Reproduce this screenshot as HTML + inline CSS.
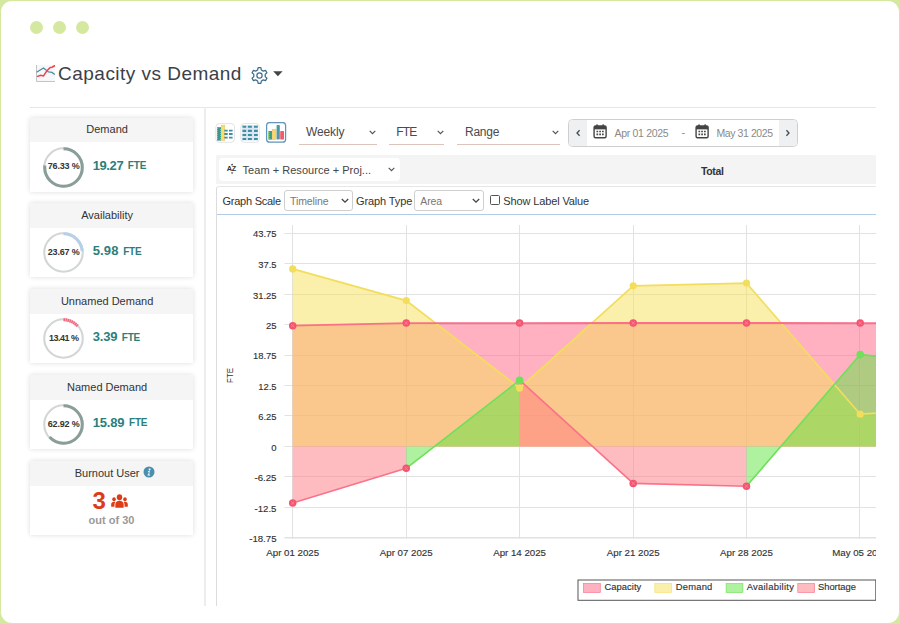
<!DOCTYPE html>
<html>
<head>
<meta charset="utf-8">
<title>Capacity vs Demand</title>
<style>
html,body{margin:0;padding:0;}
body{width:900px;height:624px;overflow:hidden;background:#d5e8a0;font-family:"Liberation Sans",sans-serif;position:relative;}
#card{position:absolute;left:1px;top:1px;width:897.8px;height:621.9px;background:#fff;border-radius:11px;}
.t{position:absolute;white-space:nowrap;line-height:1;color:#333;}
.dot{position:absolute;width:13px;height:13px;border-radius:50%;background:#d5e8a0;top:20.8px;}
.hl{position:absolute;background:#e4e4e4;}
.kc{position:absolute;left:29.9px;width:163.2px;height:74px;background:#fff;box-shadow:0 0 5px rgba(0,0,0,0.14);}
.kc .hd{position:absolute;left:0;top:0;width:100%;height:24.6px;background:#f5f5f5;}
.kc .ti{position:absolute;left:-4.4px;width:100%;text-align:center;top:6.5px;font-size:11px;line-height:1;color:#333;white-space:nowrap;}
.kc svg{position:absolute;left:12.6px;top:28.1px;}
.kc .pc{position:absolute;left:12.3px;top:44.6px;width:43px;text-align:center;font-size:9px;font-weight:bold;line-height:1;color:#333;letter-spacing:-0.15px;white-space:nowrap;}
.kc .v{position:absolute;left:62.8px;top:41px;font-size:13px;font-weight:bold;color:#2b7f7b;line-height:1;letter-spacing:-0.3px;white-space:nowrap;}
.kc .v span{font-size:10px;letter-spacing:-0.2px;margin-left:4.6px;position:relative;top:-0.8px;}
.sel{position:absolute;top:118px;height:25.6px;border-bottom:1.2px solid #dcc3bb;}
.sel .t{top:7.5px;font-size:12px;color:#4a4a4a;}
.chev{position:absolute;}
</style>
</head>
<body>
<div id="card"></div>
<div class="dot" style="left:29.8px"></div>
<div class="dot" style="left:52.8px"></div>
<div class="dot" style="left:75.5px"></div>

<!-- title -->
<svg style="position:absolute;left:35px;top:64px" width="22" height="19" viewBox="0 0 22 19">
<rect x="1.5" y="1" width="18.5" height="16.5" fill="#f6f7f8"/>
<path d="M1.5 1V17.5H20" fill="none" stroke="#c4c4c4" stroke-width="1"/>
<path d="M1.5 8.3L8.5 4L13.5 8L17 8.4L19.8 10.6" fill="none" stroke="#4a8fa3" stroke-width="1.3"/>
<path d="M2 12.6L5.5 11.2L8.5 12L12 6.6L15 3.6L17 3.2L20 1.5" fill="none" stroke="#f0404f" stroke-width="1.5"/>
</svg>
<div class="t" id="title" style="left:58.1px;top:64.1px;font-size:19px;color:#3b4049;letter-spacing:0.47px;">Capacity vs Demand</div>
<svg style="position:absolute;left:250px;top:65.5px" width="19" height="19" viewBox="-9.5 -9.5 19 19">
<g fill="none" stroke="#3d6d8c" stroke-width="1.25" stroke-linejoin="round">
<path d="M-1.89 -5.48L-1.37 -7.78L1.37 -7.78L1.89 -5.48L3.81 -4.38L6.05 -5.08L7.42 -2.70L5.69 -1.11L5.69 1.11L7.42 2.70L6.05 5.08L3.81 4.38L1.89 5.48L1.37 7.78L-1.37 7.78L-1.89 5.48L-3.81 4.38L-6.05 5.08L-7.42 2.70L-5.69 1.11L-5.69 -1.11L-7.42 -2.70L-6.05 -5.08L-3.81 -4.38Z"/>
<circle r="2.6"/>
</g>
</svg>
<svg style="position:absolute;left:272.5px;top:71px" width="10" height="6" viewBox="0 0 10 6"><path d="M0.2 0.3H9.6L4.9 5.3Z" fill="#444"/></svg>

<div class="hl" style="left:30px;top:106.8px;width:846px;height:1.2px;background:#e6e6e6"></div>
<div class="hl" style="left:204.1px;top:107px;width:1.9px;height:499px;background:#ecedef"></div>

<!-- KPI cards -->
<div class="kc" style="top:117.5px">
  <div class="hd"></div><div class="ti">Demand</div>
  <svg width="43" height="43" viewBox="-21.5 -21.5 43 43">
    <circle r="19.25" fill="none" stroke="#d3d6d6" stroke-width="2.1"/>
    <circle r="18.75" fill="none" stroke="#8a9e99" stroke-width="3" stroke-dasharray="89.9 117.8" transform="rotate(-90)"/>
  </svg>
  <div class="pc">76.33 %</div>
  <div class="v" style="letter-spacing:-0.4px">19.27<span>FTE</span></div>
</div>
<div class="kc" style="top:203.4px">
  <div class="hd"></div><div class="ti">Availability</div>
  <svg width="43" height="43" viewBox="-21.5 -21.5 43 43">
    <circle r="19.25" fill="none" stroke="#d3d6d6" stroke-width="2.1"/>
    <circle r="18.75" fill="none" stroke="#b5d0e8" stroke-width="3" stroke-dasharray="27.9 117.8" transform="rotate(-90)"/>
  </svg>
  <div class="pc">23.67 %</div>
  <div class="v" style="letter-spacing:0.15px">5.98<span>FTE</span></div>
</div>
<div class="kc" style="top:289.3px">
  <div class="hd"></div><div class="ti">Unnamed Demand</div>
  <svg width="43" height="43" viewBox="-21.5 -21.5 43 43">
    <circle r="19.25" fill="none" stroke="#d3d6d6" stroke-width="2.1"/>
    <circle r="18.75" fill="none" stroke="#fbc3cc" stroke-width="3" stroke-dasharray="15.80 117.8" transform="rotate(-90)"/>
    <circle r="18.75" fill="none" stroke="#f2667e" stroke-width="3" stroke-dasharray="1.5 0.54 1.5 0.54 1.5 0.54 1.5 0.54 1.5 0.54 1.5 0.54 1.5 0.54 1.5 117.8" transform="rotate(-90)"/>
  </svg>
  <div class="pc" style="letter-spacing:-0.5px">13.41 %</div>
  <div class="v" style="letter-spacing:-0.2px">3.39<span>FTE</span></div>
</div>
<div class="kc" style="top:375.2px">
  <div class="hd"></div><div class="ti">Named Demand</div>
  <svg width="43" height="43" viewBox="-21.5 -21.5 43 43">
    <circle r="19.25" fill="none" stroke="#d3d6d6" stroke-width="2.1"/>
    <circle r="18.75" fill="none" stroke="#8a9e99" stroke-width="3" stroke-dasharray="74.1 117.8" transform="rotate(-90)"/>
  </svg>
  <div class="pc">62.92 %</div>
  <div class="v" style="letter-spacing:-0.16px">15.89<span>FTE</span></div>
</div>
<div class="kc" style="top:461.1px">
  <div class="hd"></div><div class="ti">Burnout User</div>
  <svg style="left:113.4px;top:5.1px" width="12" height="12" viewBox="0 0 12 12"><circle cx="6" cy="6" r="5.5" fill="#4a8fae"/><path d="M6.6 2.6a.9.9 0 1 1-.01 0M4.9 5h1.9L6.1 8.6h.9V9.4H4.6V8.6h.7L5.8 5.8H4.9Z" fill="#fff"/></svg>
  <div class="t" style="left:62.6px;top:28.4px;font-size:24px;font-weight:bold;color:#dc3d17;">3</div>
  <svg style="left:81.3px;top:33.4px" width="17" height="14.2" viewBox="0 0 18 14" preserveAspectRatio="none"><g fill="#dc3d17">
    <circle cx="9" cy="3.2" r="2.9"/><path d="M4.6 13.6V10.4C4.6 8 6.4 6.6 9 6.6S13.400000000000002 8 13.400000000000002 10.4V13.6Z"/>
    <circle cx="3.2" cy="5.2" r="1.9"/><path d="M0.2 12.6V10.2C0.2 8.6 1.4 7.6 3.2 7.6C3.7 7.6 4.2 7.7 4.6 7.9C4 8.6 3.7 9.5 3.7 10.4V12.6Z"/>
    <circle cx="14.8" cy="5.2" r="1.9"/><path d="M17.8 12.6V10.2C17.8 8.6 16.6 7.6 14.8 7.600000000000001C14.3 7.6 13.8 7.7 13.4 7.9C14 8.6 14.3 9.5 14.3 10.4V12.6Z"/>
  </g></svg>
  <div class="t" style="left:0;width:100%;text-align:center;top:54px;font-size:11px;font-weight:bold;color:#9a9a9a;">out of 30</div>
</div>

<!-- TOOLBAR -->
<!-- view icons -->
<svg style="position:absolute;left:215px;top:122px" width="73" height="22" viewBox="215 122 73 22">
  <rect x="215.9" y="123.6" width="18.6" height="18.7" rx="3.4" fill="#fff" stroke="#e4e4e4" stroke-width="1"/>
  <rect x="217.1" y="127.2" width="3.9" height="13.4" fill="#3a958f"/>
  <path d="M217.1 128.5h1M217.1 130.5h1M217.1 132.5h1M217.1 134.5h1M217.1 136.5h1M217.1 138.5h1M220 129.5h1M220 131.5h1M220 133.5h1M220 135.5h1M220 137.5h1M220 139.3h1" stroke="#8fe04a" stroke-width="0.9"/>
  <rect x="221.4" y="125.2" width="3.4" height="15.2" fill="#f8e062" stroke="#f5bd72" stroke-width="0.6"/>
  <path d="M224.3 130.7h3.4M229 130.7h3.6M224.3 134h3.4M229 134h3.6M224.3 137.6h3.4M229 137.6h3.6" stroke="#3f8fa0" stroke-width="1.8"/>
  <rect x="240.9" y="123.6" width="18.4" height="18.7" rx="3.4" fill="#fff" stroke="#e4e4e4" stroke-width="1"/>
  <rect x="242.1" y="125" width="16" height="15.6" fill="#dbe8f4"/>
  <path d="M242.5 126.7h3.7M247.9 126.7h4M254 126.7h3.8M242.5 130.9h3.7M247.9 130.9h4M254 130.9h3.8M242.5 135h3.7M247.9 135h4M254 135h3.8M242.5 139h3.7M247.9 139h4M254 139h3.8" stroke="#3f8fa0" stroke-width="2.1"/>
  <rect x="266.6" y="122.6" width="19" height="19.6" rx="3" fill="#fff" stroke="#6293bb" stroke-width="1.25"/>
  <rect x="268.4" y="131" width="3.6" height="8.6" fill="#3f9a8c"/>
  <path d="M268.4 132.5h1.2M268.4 134.5h1.2M268.4 136.5h1.2M268.4 138.5h1.2" stroke="#9ad84a" stroke-width="0.9"/>
  <rect x="272.2" y="129.2" width="3.8" height="10.4" fill="#f6d96b" stroke="#f3b66a" stroke-width="0.5"/>
  <rect x="276.6" y="125" width="3.2" height="14.6" rx="0.8" fill="#4a97a6"/>
  <rect x="280.2" y="131" width="3.8" height="8.6" rx="0.6" fill="#f3596f"/>
</svg>

<!-- selects -->
<div class="sel" style="left:298.5px;width:78px"><div class="t" id="s1" style="left:7.5px;letter-spacing:-0.12px">Weekly</div>
  <svg class="chev" style="left:70px;top:11.5px" width="7" height="5" viewBox="0 0 7 5"><path d="M0.7 0.8L3.5 3.6L6.3 0.8" fill="none" stroke="#555" stroke-width="1.2"/></svg></div>
<div class="sel" style="left:388.5px;width:55.5px"><div class="t" id="s2" style="left:7.8px;letter-spacing:-0.8px">FTE</div>
  <svg class="chev" style="left:48px;top:11.5px" width="7" height="5" viewBox="0 0 7 5"><path d="M0.7 0.8L3.5 3.6L6.3 0.8" fill="none" stroke="#555" stroke-width="1.2"/></svg></div>
<div class="sel" style="left:456.5px;width:103.5px"><div class="t" id="s3" style="left:8.5px;letter-spacing:-0.25px">Range</div>
  <svg class="chev" style="left:95px;top:11.5px" width="7" height="5" viewBox="0 0 7 5"><path d="M0.7 0.8L3.5 3.6L6.3 0.8" fill="none" stroke="#555" stroke-width="1.2"/></svg></div>

<!-- date range -->
<div style="position:absolute;left:568px;top:119px;width:227.6px;height:25.5px;border:1px solid #cfcfcf;border-radius:4.5px;background:#fff;overflow:hidden;">
  <div style="position:absolute;left:0;top:0;width:18px;height:26px;background:#eef0f1;"></div>
  <div style="position:absolute;right:0;top:0;width:18px;height:26px;background:#eef0f1;"></div>
</div>
<svg style="position:absolute;left:575px;top:128.7px" width="6" height="8" viewBox="0 0 6 8"><path d="M4.6 1.3L2 4L4.6 6.7" fill="none" stroke="#454b55" stroke-width="1.3"/></svg>
<svg style="position:absolute;left:785.2px;top:128.7px" width="6" height="8" viewBox="0 0 6 8"><path d="M1.4 1.3L4 4L1.4 6.7" fill="none" stroke="#454b55" stroke-width="1.3"/></svg>
<svg style="position:absolute;left:592.7px;top:124.2px" width="14.2" height="14.8" viewBox="0 0 15 16"><g id="cal">
  <rect x="1" y="2.2" width="13" height="12.6" rx="1.6" fill="#fff" stroke="#444" stroke-width="1.5"/>
  <rect x="1" y="2.2" width="13" height="3.6" fill="#444"/>
  <rect x="3.4" y="0.3" width="1.6" height="3" rx="0.6" fill="#444"/><rect x="10" y="0.3" width="1.6" height="3" rx="0.6" fill="#444"/>
  <path d="M3.6 8.2h1.8M6.6 8.2h1.8M9.6 8.2h1.8M3.6 11.2h1.8M6.6 11.2h1.8M9.6 11.2h1.8" stroke="#444" stroke-width="1.7"/>
</g></svg>
<svg style="position:absolute;left:695.1px;top:124.2px" width="14.2" height="14.8" viewBox="0 0 15 16"><use href="#cal"/></svg>
<div class="t" id="d1" style="left:614.5px;top:127.5px;font-size:10.5px;color:#8a8a8a;letter-spacing:-0.3px">Apr 01 2025</div>
<div class="t" style="left:681.5px;top:127px;font-size:11px;color:#8a8a8a;">-</div>
<div class="t" id="d2" style="left:716.5px;top:127.5px;font-size:10.5px;color:#8a8a8a;letter-spacing:-0.42px">May 31 2025</div>

<!-- group bar -->
<div style="position:absolute;left:215.5px;top:155px;width:660.5px;height:28.5px;background:#f4f4f4;"></div>
<div style="position:absolute;left:218.7px;top:157.5px;width:181.5px;height:23.3px;background:#fff;border-radius:4px;"></div>
<svg style="position:absolute;left:226px;top:162px" width="13" height="13" viewBox="226 162 13 13" font-family="Liberation Sans, sans-serif">
  <text x="226.7" y="171.2" font-size="7.3" font-weight="bold" fill="#333" letter-spacing="-0.3">AZ</text>
  <path d="M230.8 165.2L232.1 163.6L233.4 165.2Z M230.8 172.4L232.1 174L233.4 172.4Z" fill="#333"/>
</svg>
<div class="t" id="g1" style="left:242.6px;top:165.3px;font-size:11px;color:#444;letter-spacing:0.03px">Team + Resource + Proj...</div>
<svg style="position:absolute;left:388.3px;top:167.2px" width="7" height="5" viewBox="0 0 7 5"><path d="M0.7 0.8L3.5 3.6L6.3 0.8" fill="none" stroke="#555" stroke-width="1.2"/></svg>
<div class="t" id="tot" style="left:701px;top:166.3px;font-size:10.5px;font-weight:bold;color:#333;letter-spacing:-0.35px">Total</div>

<!-- graph options row -->
<div style="position:absolute;left:215.8px;top:185.8px;width:659.2px;height:419.5px;border-left:1px solid #dcdcdc;border-top:1px solid #e6e6e6;border-top-left-radius:3px;"></div>
<div style="position:absolute;left:217px;top:213.5px;width:659px;height:1.4px;background:#b0cce6;"></div>
<div class="t" id="gs" style="left:222.5px;top:195.8px;font-size:11px;color:#333;letter-spacing:-0.25px">Graph Scale</div>
<div style="position:absolute;left:283.6px;top:190px;width:67.8px;height:19px;border:1px solid #cfcfcf;border-radius:3px;box-sizing:content-box;"></div>
<div class="t" id="tl" style="left:290px;top:195.6px;font-size:10.5px;color:#777;letter-spacing:-0.1px">Timeline</div>
<svg style="position:absolute;left:341.4px;top:197.8px" width="8" height="6" viewBox="0 0 8 6"><path d="M0.8 1L4 4.2L7.2 1" fill="none" stroke="#444" stroke-width="1.3"/></svg>
<div class="t" id="gt" style="left:356px;top:195.8px;font-size:11px;color:#333;letter-spacing:-0.1px">Graph Type</div>
<div style="position:absolute;left:414.2px;top:190px;width:68px;height:19px;border:1px solid #cfcfcf;border-radius:3px;box-sizing:content-box;"></div>
<div class="t" id="ar" style="left:420.3px;top:195.6px;font-size:10.5px;color:#777;letter-spacing:-0.1px">Area</div>
<svg style="position:absolute;left:471.8px;top:197.8px" width="8" height="6" viewBox="0 0 8 6"><path d="M0.8 1L4 4.2L7.2 1" fill="none" stroke="#444" stroke-width="1.3"/></svg>
<div style="position:absolute;left:490.3px;top:195.3px;width:7.8px;height:7.8px;border:1px solid #555;border-radius:1.5px;background:#fff;"></div>
<div class="t" id="sl" style="left:503.3px;top:195.8px;font-size:11px;color:#333;letter-spacing:-0.13px">Show Label Value</div>


<!-- CHART -->
<!--CHART_START-->
<svg style="position:absolute;left:216px;top:214px" width="660.4" height="392" viewBox="216 214 660.4 392" font-family="Liberation Sans, sans-serif">
<path d="M284.5 538.4H876.5" stroke="#ededed" stroke-width="1" fill="none"/>
<path d="M284.5 233.50H876.5M284.5 263.50H876.5M284.5 294.50H876.5M284.5 324.50H876.5M284.5 355.50H876.5M284.5 385.50H876.5M284.5 415.50H876.5M284.5 446.50H876.5M284.5 476.50H876.5M284.5 507.50H876.5M284.5 537.50H876.5M292.5 225V538.6M406.5 225V538.6M519.5 225V538.6M633.5 225V538.6M746.5 225V538.6M859.5 225V538.6" stroke="#e2e2e2" stroke-width="1" fill="none"/>
<path d="M292.7 446.6L292.7 325.7L406.25 323.1L519.6 323.1L633.2 323.0L746.5 323.0L860.2 323.1L876.5 323.1L876.5 446.6Z" fill="rgba(255,99,132,0.5)"/>
<path d="M292.7 446.6L292.7 268.9L406.25 300.6L519.6 388.1L633.2 285.8L746.5 283.1L860.2 414.2L876.5 413.0L876.5 446.6Z" fill="rgba(245,223,87,0.5)"/>
<path d="M292.7 446.6L292.7 503.0L406.25 468.3L406.25 446.6Z" fill="rgba(255,121,129,0.5)"/>
<path d="M406.25 446.6L406.25 468.3L519.6 380.2L519.6 446.6Z" fill="rgba(93,229,65,0.5)"/>
<path d="M519.6 446.6L519.6 380.2L633.2 483.4L633.2 446.6Z" fill="rgba(255,121,129,0.5)"/>
<path d="M633.2 446.6L633.2 483.4L746.5 486.2L746.5 446.6Z" fill="rgba(255,121,129,0.5)"/>
<path d="M746.5 446.6L746.5 486.2L860.2 354.6L860.2 446.6Z" fill="rgba(93,229,65,0.5)"/>
<path d="M860.2 446.6L860.2 354.6L876.5 356.2L876.5 446.6Z" fill="rgba(93,229,65,0.5)"/>
<path d="M292.7 268.9L406.25 300.6L519.6 388.1L633.2 285.8L746.5 283.1L860.2 414.2L876.5 413.0" fill="none" stroke="#f2de5d" stroke-width="1.7"/>
<path d="M292.7 325.7L406.25 323.1L519.6 323.1L633.2 323.0L746.5 323.0L860.2 323.1L876.5 323.1" fill="none" stroke="#fb6f88" stroke-width="1.8"/>
<path d="M292.7 503.0L406.25 468.3" fill="none" stroke="#fa7288" stroke-width="1.6"/>
<path d="M406.25 468.3L519.6 380.2" fill="none" stroke="#6ee05a" stroke-width="1.6"/>
<path d="M519.6 380.2L633.2 483.4" fill="none" stroke="#fa7288" stroke-width="1.6"/>
<path d="M633.2 483.4L746.5 486.2" fill="none" stroke="#fa7288" stroke-width="1.6"/>
<path d="M746.5 486.2L860.2 354.6" fill="none" stroke="#6ee05a" stroke-width="1.6"/>
<path d="M860.2 354.6L876.5 356.2" fill="none" stroke="#6ee05a" stroke-width="1.6"/>
<circle cx="292.7" cy="325.7" r="3.75" fill="#f4546f"/><path d="M291.0 324.0L294.4 327.4M291.0 327.4L294.4 324.0" stroke="#f88a9c" stroke-width="0.8"/>
<circle cx="406.25" cy="323.1" r="3.75" fill="#f4546f"/><path d="M404.55 321.40000000000003L407.95 324.8M404.55 324.8L407.95 321.40000000000003" stroke="#f88a9c" stroke-width="0.8"/>
<circle cx="519.6" cy="323.1" r="3.75" fill="#f4546f"/><path d="M517.9 321.40000000000003L521.3000000000001 324.8M517.9 324.8L521.3000000000001 321.40000000000003" stroke="#f88a9c" stroke-width="0.8"/>
<circle cx="633.2" cy="323.0" r="3.75" fill="#f4546f"/><path d="M631.5 321.3L634.9000000000001 324.7M631.5 324.7L634.9000000000001 321.3" stroke="#f88a9c" stroke-width="0.8"/>
<circle cx="746.5" cy="323.0" r="3.75" fill="#f4546f"/><path d="M744.8 321.3L748.2 324.7M744.8 324.7L748.2 321.3" stroke="#f88a9c" stroke-width="0.8"/>
<circle cx="860.2" cy="323.1" r="3.75" fill="#f4546f"/><path d="M858.5 321.40000000000003L861.9000000000001 324.8M858.5 324.8L861.9000000000001 321.40000000000003" stroke="#f88a9c" stroke-width="0.8"/>
<circle cx="292.7" cy="268.9" r="3.6" fill="#f3de5c"/>
<circle cx="406.25" cy="300.6" r="3.6" fill="#f3de5c"/>
<circle cx="519.6" cy="388.1" r="3.6" fill="#f3de5c"/>
<circle cx="633.2" cy="285.8" r="3.6" fill="#f3de5c"/>
<circle cx="746.5" cy="283.1" r="3.6" fill="#f3de5c"/>
<circle cx="860.2" cy="414.2" r="3.6" fill="#f3de5c"/>
<circle cx="292.7" cy="503.0" r="3.75" fill="#f4546f"/><path d="M291.0 501.3L294.4 504.7M291.0 504.7L294.4 501.3" stroke="#f88a9c" stroke-width="0.8"/>
<circle cx="406.25" cy="468.3" r="3.75" fill="#f4546f"/><path d="M404.55 466.6L407.95 470.0M404.55 470.0L407.95 466.6" stroke="#f88a9c" stroke-width="0.8"/>
<circle cx="519.6" cy="380.2" r="3.8" fill="#6ee05a"/>
<circle cx="633.2" cy="483.4" r="3.75" fill="#f4546f"/><path d="M631.5 481.7L634.9000000000001 485.09999999999997M631.5 485.09999999999997L634.9000000000001 481.7" stroke="#f88a9c" stroke-width="0.8"/>
<circle cx="746.5" cy="486.2" r="3.75" fill="#f4546f"/><path d="M744.8 484.5L748.2 487.9M744.8 487.9L748.2 484.5" stroke="#f88a9c" stroke-width="0.8"/>
<circle cx="860.2" cy="354.6" r="3.8" fill="#6ee05a"/>
<text x="252.90" y="237.00" font-size="9.8" fill="#2e2e2e" stroke="#2e2e2e" stroke-width="0.12" textLength="23.6" lengthAdjust="spacingAndGlyphs">43.75</text>
<text x="258.20" y="268.12" font-size="9.8" fill="#2e2e2e" stroke="#2e2e2e" stroke-width="0.12" textLength="18.3" lengthAdjust="spacingAndGlyphs">37.5</text>
<text x="252.90" y="298.64" font-size="9.8" fill="#2e2e2e" stroke="#2e2e2e" stroke-width="0.12" textLength="23.6" lengthAdjust="spacingAndGlyphs">31.25</text>
<text x="265.90" y="329.06" font-size="9.8" fill="#2e2e2e" stroke="#2e2e2e" stroke-width="0.12" textLength="10.6" lengthAdjust="spacingAndGlyphs">25</text>
<text x="252.90" y="359.48" font-size="9.8" fill="#2e2e2e" stroke="#2e2e2e" stroke-width="0.12" textLength="23.6" lengthAdjust="spacingAndGlyphs">18.75</text>
<text x="258.20" y="389.90" font-size="9.8" fill="#2e2e2e" stroke="#2e2e2e" stroke-width="0.12" textLength="18.3" lengthAdjust="spacingAndGlyphs">12.5</text>
<text x="258.20" y="420.32" font-size="9.8" fill="#2e2e2e" stroke="#2e2e2e" stroke-width="0.12" textLength="18.3" lengthAdjust="spacingAndGlyphs">6.25</text>
<text x="271.20" y="450.74" font-size="9.8" fill="#2e2e2e" stroke="#2e2e2e" stroke-width="0.12" textLength="5.3" lengthAdjust="spacingAndGlyphs">0</text>
<text x="254.50" y="481.16" font-size="9.8" fill="#2e2e2e" stroke="#2e2e2e" stroke-width="0.12" textLength="22.0" lengthAdjust="spacingAndGlyphs">-6.25</text>
<text x="254.50" y="511.88" font-size="9.8" fill="#2e2e2e" stroke="#2e2e2e" stroke-width="0.12" textLength="22.0" lengthAdjust="spacingAndGlyphs">-12.5</text>
<text x="249.20" y="542.30" font-size="9.8" fill="#2e2e2e" stroke="#2e2e2e" stroke-width="0.12" textLength="27.3" lengthAdjust="spacingAndGlyphs">-18.75</text>
<text x="292.7" y="555.8" text-anchor="middle" font-size="9.7" fill="#333" stroke="#333" stroke-width="0.15">Apr 01 2025</text>
<text x="406.25" y="555.8" text-anchor="middle" font-size="9.7" fill="#333" stroke="#333" stroke-width="0.15">Apr 07 2025</text>
<text x="519.6" y="555.8" text-anchor="middle" font-size="9.7" fill="#333" stroke="#333" stroke-width="0.15">Apr 14 2025</text>
<text x="633.2" y="555.8" text-anchor="middle" font-size="9.7" fill="#333" stroke="#333" stroke-width="0.15">Apr 21 2025</text>
<text x="746.5" y="555.8" text-anchor="middle" font-size="9.7" fill="#333" stroke="#333" stroke-width="0.15">Apr 28 2025</text>
<text x="860.2" y="555.8" text-anchor="middle" font-size="9.7" fill="#333" stroke="#333" stroke-width="0.15">May 05 2025</text>
<text transform="translate(232.8 382.9) rotate(-90)" font-size="9.3" fill="#333" textLength="14.8" lengthAdjust="spacingAndGlyphs">FTE</text>
<rect x="578" y="580" width="297.8" height="20.3" fill="#fff" stroke="#555" stroke-width="1"/>
<rect x="583.5" y="583.5" width="16.8" height="9" fill="rgba(255,99,132,0.5)" stroke="#f8607f" stroke-width="0.7" stroke-opacity="0.8"/>
<text x="604.4" y="590" font-size="9.4" fill="#333" stroke="#333" stroke-width="0.15" textLength="36.9" lengthAdjust="spacing">Capacity</text>
<rect x="654.8" y="583.5" width="16.8" height="9" fill="rgba(245,223,87,0.5)" stroke="#f3de5c" stroke-width="0.7" stroke-opacity="0.8"/>
<text x="675.8" y="590" font-size="9.4" fill="#333" stroke="#333" stroke-width="0.15" textLength="36.5" lengthAdjust="spacing">Demand</text>
<rect x="726.1" y="583.5" width="16.8" height="9" fill="rgba(93,229,65,0.5)" stroke="#62dd4a" stroke-width="0.7" stroke-opacity="0.8"/>
<text x="746.7" y="590" font-size="9.4" fill="#333" stroke="#333" stroke-width="0.15" textLength="47.2" lengthAdjust="spacing">Availability</text>
<rect x="797.8" y="583.5" width="16.8" height="9" fill="rgba(255,121,129,0.5)" stroke="#f8647e" stroke-width="0.7" stroke-opacity="0.8"/>
<text x="818.0" y="590" font-size="9.4" fill="#333" stroke="#333" stroke-width="0.15" textLength="37.9" lengthAdjust="spacing">Shortage</text>
</svg>
<!--CHART_END-->

</body>
</html>
